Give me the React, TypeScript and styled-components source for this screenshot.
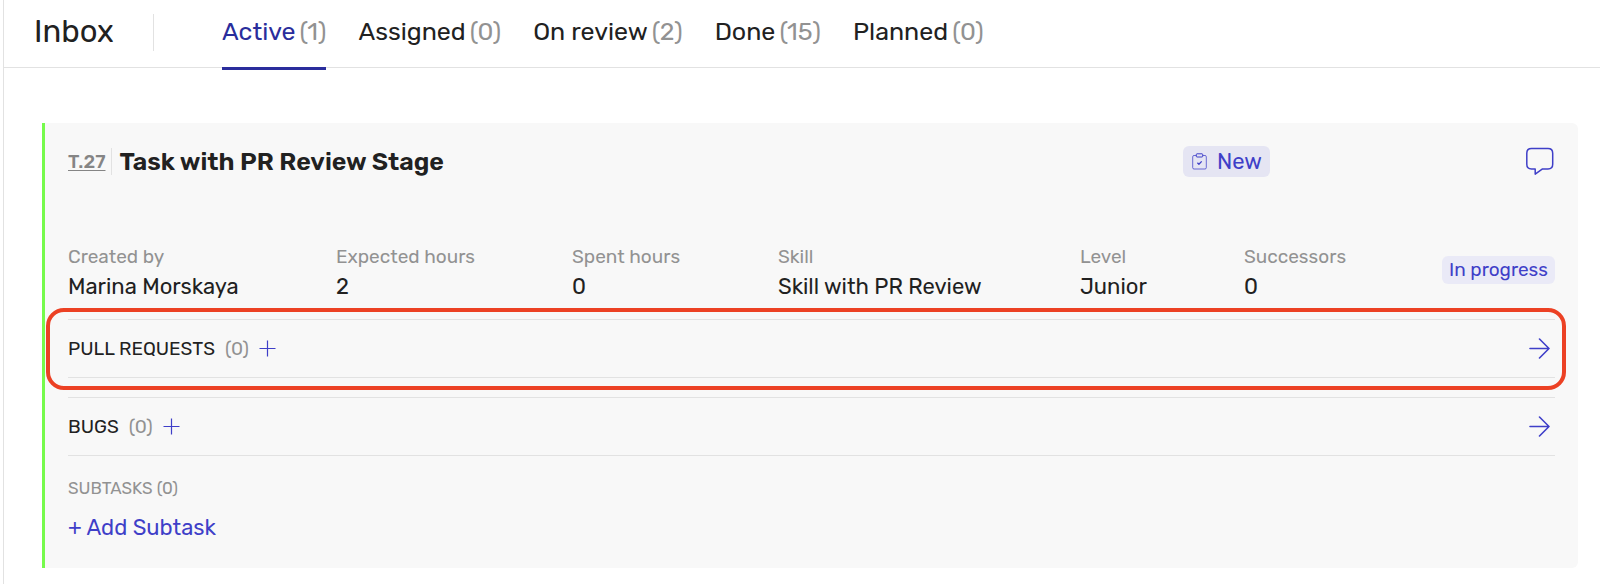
import React from "react";
import styled, { createGlobalStyle } from "styled-components";

const color = {
  ink: "#212121",
  muted: "#929292",
  id: "#858585",
  line: "#e2e2e2",
  accent: "#3f3fc8",
  active: "#2a2d9c",
  surface: "#f8f8f8",
  chip: "#e5e5f3",
  badge: "#eaeaf7",
  stripe: "#76fb4c",
  highlight: "#ec4124",
};

const GlobalStyle = createGlobalStyle`
  *, *::before, *::after { box-sizing: border-box; }
  body {
    margin: 0;
    background: #fff;
    color: ${color.ink};
    font-family: Rubik, Inter, "Liberation Sans", sans-serif;
  }
  button { font: inherit; border: 0; padding: 0; background: none; cursor: pointer; }
  a { color: inherit; }
  svg { display: block; }
`;

const Page = styled.div`
  margin-left: 3px;
  min-height: 100vh;
  border-left: 1px solid ${color.line};
`;

const Header = styled.header`
  display: flex;
  align-items: flex-start;
  height: 68px;
  padding-left: 30px;
  border-bottom: 1px solid ${color.line};
`;

const PageTitle = styled.h1`
  margin: 0;
  width: 119px;
  font-size: 31px;
  font-weight: 400;
  line-height: 64px;
`;

const HeaderDivider = styled.span`
  width: 1px;
  height: 37px;
  margin-top: 14px;
  background: ${color.line};
`;

const Tabs = styled.nav`
  display: flex;
  gap: 32px;
  margin-left: 68px;
`;

const Tab = styled.a<{ $active?: boolean }>`
  display: flex;
  gap: 4px;
  height: 70px;
  border-bottom: 3px solid ${(p) => (p.$active ? color.active : "transparent")};
  color: ${(p) => (p.$active ? color.active : color.ink)};
  font-size: 25px;
  line-height: 64px;
  text-decoration: none;
  white-space: nowrap;
`;

const Count = styled.span`
  color: ${color.muted};
`;

const Card = styled.article`
  margin: 55px 22px 17px 38px;
  padding: 23px 23px 24px;
  border-left: 3px solid ${color.stripe};
  border-radius: 0 6px 6px 0;
  background: ${color.surface};
`;

const CardHead = styled.div`
  display: grid;
  grid-template-columns: 1115fr 372fr;
  align-items: center;
  height: 31px;
`;

const HeadGroup = styled.div`
  display: flex;
  align-items: center;
  justify-content: space-between;
`;

const TaskName = styled.div`
  display: flex;
  align-items: center;
`;

const TaskId = styled.a`
  color: ${color.id};
  font-size: 19px;
  font-weight: 500;
  line-height: 28px;
  text-underline-offset: 2px;
`;

const TaskTitle = styled.h2`
  margin: 0 0 0 6px;
  padding-left: 7px;
  border-left: 1px solid ${color.line};
  font-size: 25px;
  font-weight: 600;
  line-height: 27px;
  white-space: nowrap;
`;

const StageChip = styled.span`
  display: flex;
  align-items: center;
  gap: 10px;
  height: 31px;
  padding: 0 8px 0 9px;
  border-radius: 6px;
  background: ${color.chip};
  color: ${color.accent};
  font-size: 22px;
  line-height: 27px;
`;

const IconButton = styled.button`
  display: flex;
  color: ${color.accent};
`;

const Details = styled.dl`
  display: grid;
  grid-template-columns: 268fr 236fr 206fr 302fr 164fr 199fr 112fr;
  margin: 66px 0 16px;
  white-space: nowrap;
`;

const Detail = styled.div`
  min-width: 0;
`;

const Label = styled.dt`
  color: ${color.muted};
  font-size: 19px;
  line-height: 28px;
`;

const Value = styled.dd`
  margin: 0;
  font-size: 22px;
  line-height: 32px;
`;

const StatusCell = styled.div`
  display: flex;
  align-items: center;
  justify-content: flex-end;
  min-width: 0;
  padding-bottom: 6px;
`;

const Status = styled.span`
  padding: 0 7px;
  border-radius: 6px;
  background: ${color.badge};
  color: ${color.accent};
  font-size: 19px;
  line-height: 28px;
`;

const Section = styled.section<{ $highlighted?: boolean }>`
  position: relative;
  display: flex;
  align-items: center;
  height: 59px;
  padding-right: 5px;
  border: solid ${color.line};
  border-width: 1px 0;

  & + & {
    margin-top: 19px;
  }

  &::after {
    content: "";
    display: ${(p) => (p.$highlighted ? "block" : "none")};
    position: absolute;
    inset: -12px -11px -13px -22px;
    border: 4px solid ${color.highlight};
    border-radius: 18px;
    pointer-events: none;
  }
`;

const SectionTitle = styled.h3`
  margin: 0;
  font-size: 19px;
  font-weight: 400;
`;

const SectionCount = styled.span`
  margin: 0 10px;
  color: ${color.muted};
  font-size: 19px;
`;

const SectionLink = styled(IconButton)`
  margin-left: auto;
`;

const SubtasksTitle = styled.h3`
  margin: 20px 0 12px;
  color: ${color.muted};
  font-size: 17px;
  font-weight: 400;
  line-height: 24px;
`;

const AddSubtask = styled.button`
  display: block;
  color: ${color.accent};
  font-size: 22px;
  line-height: 32px;
`;

const ClipboardIcon = () => (
  <svg width="15" height="17" viewBox="0 0 15 17" fill="none" stroke="currentColor" strokeWidth="1" strokeLinejoin="round" aria-hidden="true">
    <path d="M4 2.5H2A1.3 1.3 0 0 0 .7 3.8V14.7A1.3 1.3 0 0 0 2 16H13A1.3 1.3 0 0 0 14.3 14.7V3.8A1.3 1.3 0 0 0 13 2.5H11" opacity=".75" />
    <path d="M4.3 1.5Q4.3 .8 5 .8H10Q10.7 .8 10.7 1.5V3.2Q10.7 4 10 4H5Q4.3 4 4.3 3.2Z" />
    <path d="M5.4 9.8L6.9 11.2L9.7 8.4" strokeWidth="1.3" />
  </svg>
);

const CommentIcon = () => (
  <svg width="29" height="29" viewBox="0 0 29 29" fill="none" stroke="currentColor" strokeWidth="1.5" strokeLinejoin="round" aria-hidden="true">
    <path d="M5.5 1.5H22Q26.700 1.5 26.700 6.2V17.200Q26.700 21.900 22 21.900H16.500L9.200 27.100V21.900H5.500Q.8 21.900 .8 17.200V6.200Q.8 1.500 5.500 1.500Z" />
  </svg>
);

const PlusIcon = () => (
  <svg width="17" height="17" viewBox="0 0 17 17" fill="none" stroke="currentColor" strokeWidth="1.2" aria-hidden="true">
    <path d="M8.5 .5V16.5M.5 8.5H16.5" />
  </svg>
);

const ArrowIcon = () => (
  <svg width="21" height="21" viewBox="0 0 21 21" fill="none" stroke="currentColor" strokeWidth="1.6" strokeLinecap="round" strokeLinejoin="round" aria-hidden="true">
    <path d="M1 10.5H20M10.5 1L20 10.5L10.5 20" />
  </svg>
);

const tabs = [
  { name: "Active", count: 1, active: true },
  { name: "Assigned", count: 0 },
  { name: "On review", count: 2 },
  { name: "Done", count: 15 },
  { name: "Planned", count: 0 },
];

const details = [
  ["Created by", "Marina Morskaya"],
  ["Expected hours", "2"],
  ["Spent hours", "0"],
  ["Skill", "Skill with PR Review"],
  ["Level", "Junior"],
  ["Successors", "0"],
];

const sections = [
  { title: "PULL REQUESTS", item: "pull request", highlighted: true },
  { title: "BUGS", item: "bug" },
];

export default function App() {
  return (
    <>
      <GlobalStyle />
      <Page>
        <Header>
          <PageTitle>Inbox</PageTitle>
          <HeaderDivider />
          <Tabs aria-label="Task lists">
            {tabs.map((t) => (
              <Tab key={t.name} href="#" $active={t.active} aria-current={t.active ? "page" : undefined}>
                <span>{t.name}</span>
                <Count>({t.count})</Count>
              </Tab>
            ))}
          </Tabs>
        </Header>
        <main>
          <Card>
            <CardHead>
              <TaskName>
                <TaskId href="#">T.27</TaskId>
                <TaskTitle>Task with PR Review Stage</TaskTitle>
              </TaskName>
              <HeadGroup>
                <StageChip>
                  <ClipboardIcon />
                  New
                </StageChip>
                <IconButton type="button" aria-label="Comments">
                  <CommentIcon />
                </IconButton>
              </HeadGroup>
            </CardHead>
            <Details>
              {details.map(([label, value]) => (
                <Detail key={label}>
                  <Label>{label}</Label>
                  <Value>{value}</Value>
                </Detail>
              ))}
              <StatusCell>
                <Status>In progress</Status>
              </StatusCell>
            </Details>
            {sections.map((s) => (
              <Section key={s.title} $highlighted={s.highlighted}>
                <SectionTitle>{s.title}</SectionTitle>
                <SectionCount>(0)</SectionCount>
                <IconButton type="button" aria-label={`Add ${s.item}`}>
                  <PlusIcon />
                </IconButton>
                <SectionLink type="button" aria-label={`Open ${s.item} list`}>
                  <ArrowIcon />
                </SectionLink>
              </Section>
            ))}
            <SubtasksTitle>SUBTASKS (0)</SubtasksTitle>
            <AddSubtask type="button">+ Add Subtask</AddSubtask>
          </Card>
        </main>
      </Page>
    </>
  );
}
